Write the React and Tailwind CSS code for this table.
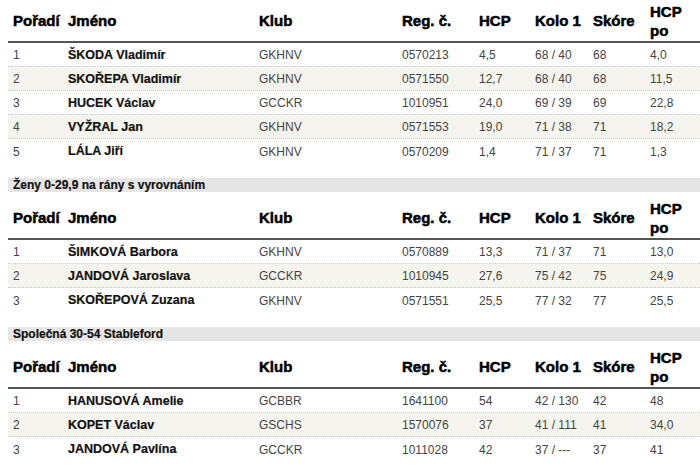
import React from 'react';

const cols = 'grid grid-cols-[55px_191px_143px_77px_56px_58px_57px_55px]';

const sections = [
  {
    title: null,
    rows: [
      ['1', 'ŠKODA Vladimír', 'GKHNV', '0570213', '4,5', '68 / 40', '68', '4,0'],
      ['2', 'SKOŘEPA Vladimír', 'GKHNV', '0571550', '12,7', '68 / 40', '68', '11,5'],
      ['3', 'HUCEK Václav', 'GCCKR', '1010951', '24,0', '69 / 39', '69', '22,8'],
      ['4', 'VYŽRAL Jan', 'GKHNV', '0571553', '19,0', '71 / 38', '71', '18,2'],
      ['5', 'LÁLA Jiří', 'GKHNV', '0570209', '1,4', '71 / 37', '71', '1,3'],
    ],
  },
  {
    title: 'Ženy 0-29,9 na rány s vyrovnáním',
    rows: [
      ['1', 'ŠIMKOVÁ Barbora', 'GKHNV', '0570889', '13,3', '71 / 37', '71', '13,0'],
      ['2', 'JANDOVÁ Jaroslava', 'GCCKR', '1010945', '27,6', '75 / 42', '75', '24,9'],
      ['3', 'SKOŘEPOVÁ Zuzana', 'GKHNV', '0571551', '25,5', '77 / 32', '77', '25,5'],
    ],
  },
  {
    title: 'Společná 30-54 Stableford',
    rows: [
      ['1', 'HANUSOVÁ Amelie', 'GCBBR', '1641100', '54', '42 / 130', '42', '48'],
      ['2', 'KOPET Václav', 'GSCHS', '1570076', '37', '41 / 111', '41', '34,0'],
      ['3', 'JANDOVÁ Pavlína', 'GCCKR', '1011028', '42', '37 / ---', '37', '41'],
    ],
  },
];

function ResultTable({ rows }) {
  return (
    <div>
      <div className={`${cols} h-[43px] items-center border-b-2 border-[#555] text-[15px] font-bold leading-[19px] text-black [-webkit-text-stroke:0.5px_black]`}>
        <div className="pl-[5px]">Pořadí</div>
        <div className="pl-[5px]">Jméno</div>
        <div className="pl-[5px]">Klub</div>
        <div className="pl-[5px]">Reg. č.</div>
        <div className="pl-[5px]">HCP</div>
        <div className="pl-[5px]">Kolo 1</div>
        <div className="pl-[5px]">Skóre</div>
        <div className="pl-[5px]">HCP<br />po</div>
      </div>
      {rows.map((r, i) => (
        <div
          key={i}
          className={`${cols} h-[24px] items-center pt-[1px] text-[12px] text-[#444] ${
            i % 2 === 1 ? 'bg-[#f5f4ee]' : ''
          } ${i < rows.length - 1 ? 'border-b border-dotted border-[#c8c8c8]' : ''}`}
        >
          {r.map((c, j) => (
            <div
              key={j}
              className={`pl-[5px] whitespace-nowrap ${
                j === 1 ? 'font-bold text-[12.5px] text-[#111] [-webkit-text-stroke:0.2px_#111]' : ''
              }`}
            >
              {c}
            </div>
          ))}
        </div>
      ))}
    </div>
  );
}

export default function App() {
  return (
    <div className="w-[700px] h-[468px] overflow-hidden bg-white pl-[8px] font-['Liberation_Sans',Arial,sans-serif]">
      {sections.map((s, i) => (
        <div key={i}>
          {s.title && (
            <div className="mt-[15px] mb-[5px] h-[14px] bg-[#e6e6e6] pl-[5px] text-[12px] font-bold leading-[14px] text-[#111] [-webkit-text-stroke:0.2px_#111]">
              {s.title}
            </div>
          )}
          <ResultTable rows={s.rows} />
        </div>
      ))}
    </div>
  );
}
